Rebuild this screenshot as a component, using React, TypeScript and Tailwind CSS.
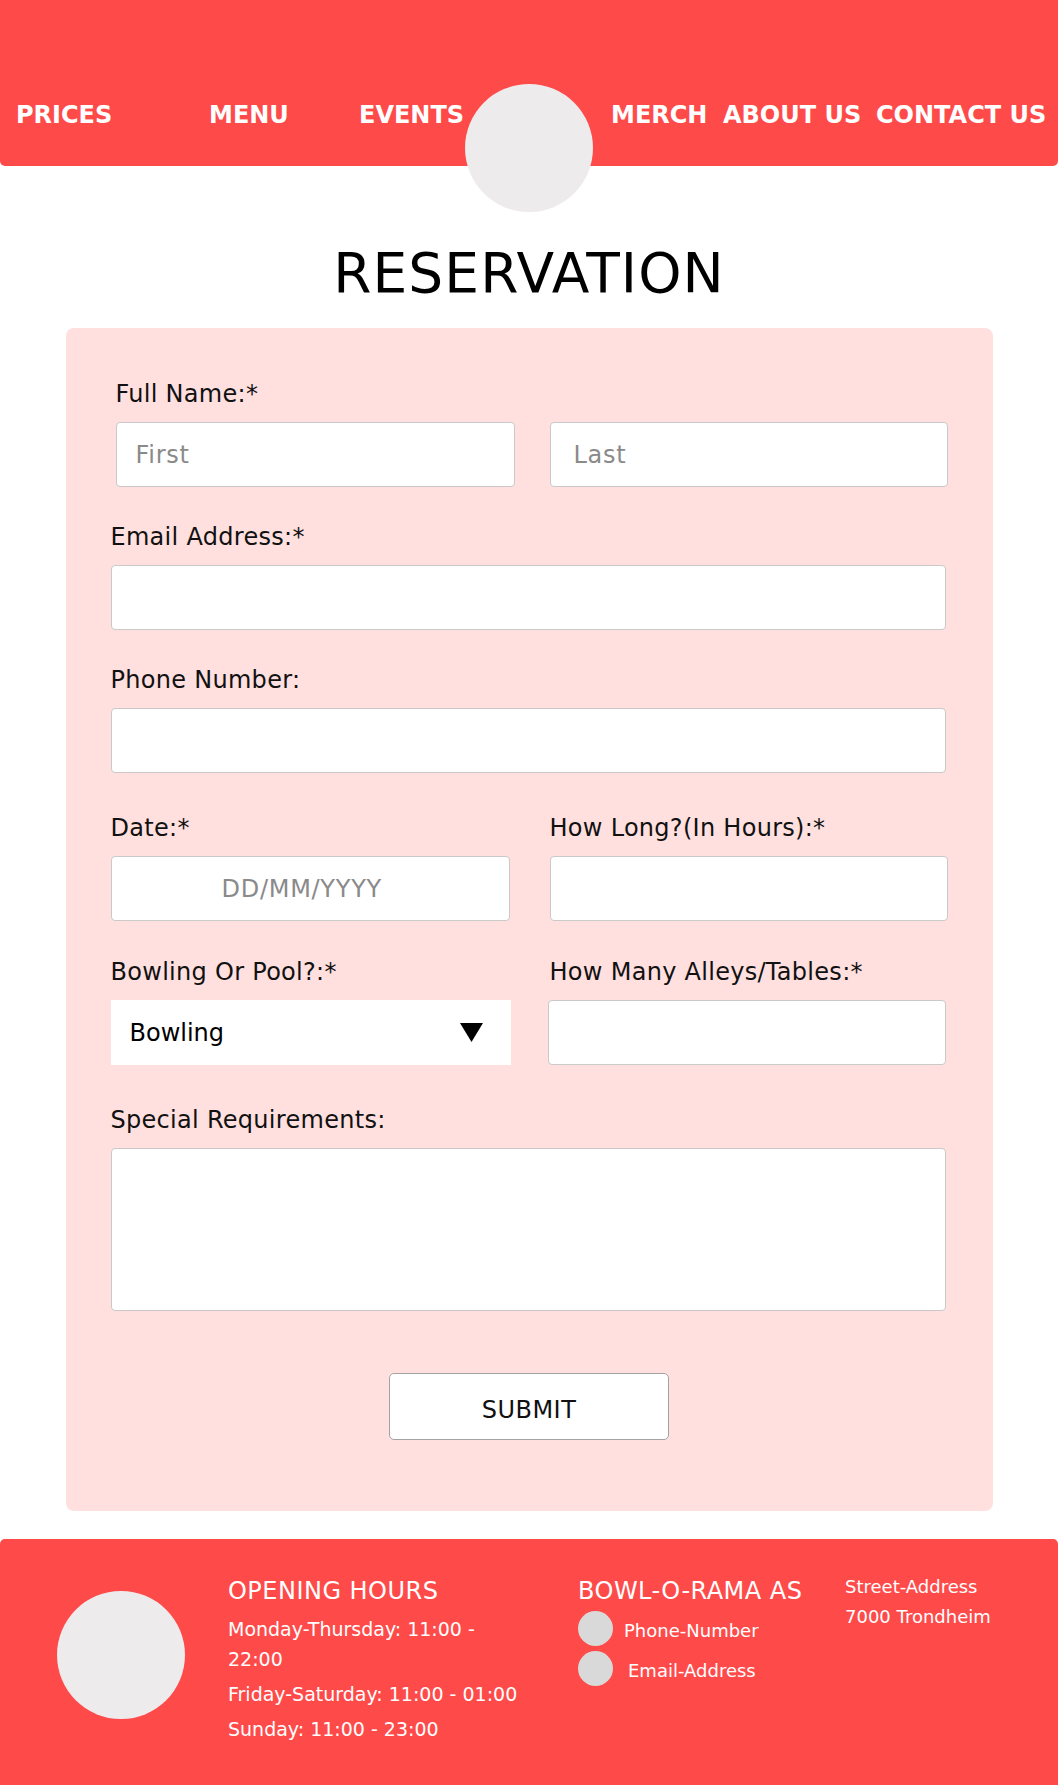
import React from 'react';

const navItems = [
  { label: 'PRICES', cls: 'ml-[16px] w-[98px]' },
  { label: 'MENU', cls: 'ml-[95px] w-[77px]' },
  { label: 'EVENTS', cls: 'ml-[73px] w-[104px]' },
  { label: 'MERCH', cls: 'ml-[148px] w-[93px]' },
  { label: 'ABOUT US', cls: 'ml-[19px] w-[137px]' },
  { label: 'CONTACT US', cls: 'ml-[16px] w-[170px]' },
];

const inputCls =
  'shrink-0 h-[65px] bg-white border border-[#c9c9c9] rounded-[4px] px-[19px] text-[24px] tracking-[0.03em] text-black placeholder:text-[#8a8a8a] outline-none';

const labelCls = 'text-[24px] leading-[28px] tracking-[0.012em] text-[#111]';

const Header: React.FC = () => (
  <header className="relative h-[166px] bg-[#ff4a4a] rounded-b-[5px] flex items-start pt-[101px]">
    {navItems.map((item) => (
      <a
        key={item.label}
        href="#"
        className={`${item.cls} shrink-0 whitespace-nowrap text-[24px] leading-[28px] font-bold text-white`}
      >
        {item.label}
      </a>
    ))}
    <div className="absolute left-[465px] top-[84px] w-[128px] h-[128px] rounded-full bg-[#edebeb]" />
  </header>
);

const ReservationForm: React.FC = () => (
  <form className="mx-auto mt-[23px] w-[927px] bg-[#ffe0df] rounded-[8px] pt-[52px] pl-[45px] pr-[45px] pb-[71px] flex flex-col">
    <div className="pl-[5px] flex flex-col">
      <label className={`${labelCls} tracking-[0.03em]`}>Full Name:*</label>
      <div className="mt-[14px] flex gap-[35px]">
        <input className={`${inputCls} w-[399px]`} placeholder="First" />
        <input className={`${inputCls} w-[398px] pl-[23px]`} placeholder="Last" />
      </div>
    </div>

    <label className={`${labelCls} mt-[36px]`}>Email Address:*</label>
    <input className={`${inputCls} mt-[14px] w-[835px]`} />

    <label className={`${labelCls} mt-[36px]`}>Phone Number:</label>
    <input className={`${inputCls} mt-[14px] w-[835px]`} />

    <div className="mt-[41px] flex">
      <div className="flex flex-col w-[439px] shrink-0">
        <label className={labelCls}>Date:*</label>
        <input className={`${inputCls} mt-[14px] w-[399px] pl-[110px]`} placeholder="DD/MM/YYYY" />
      </div>
      <div className="flex flex-col w-[398px] shrink-0">
        <label className={`${labelCls} tracking-[0.03em] whitespace-nowrap`}>How Long?(In Hours):*</label>
        <input className={`${inputCls} mt-[14px] w-[398px]`} />
      </div>
    </div>

    <div className="mt-[37px] flex">
      <div className="flex flex-col w-[439px] shrink-0">
        <label className={labelCls}>Bowling Or Pool?:*</label>
        <div className="mt-[14px] w-[400px] h-[65px] bg-white flex items-center justify-between pl-[19px] pr-[28px]">
          <span className="text-[24px] text-black">Bowling</span>
          <svg width="23" height="19" viewBox="0 0 23 19">
            <polygon points="0,0 23,0 11.5,19" fill="#000" />
          </svg>
        </div>
      </div>
      <div className="flex flex-col w-[398px] shrink-0">
        <label className={`${labelCls} whitespace-nowrap`}>How Many Alleys/Tables:*</label>
        <input className={`${inputCls} mt-[14px] -ml-[2px] w-[398px]`} />
      </div>
    </div>

    <label className={`${labelCls} mt-[41px]`}>Special Requirements:</label>
    <textarea className="mt-[14px] w-[835px] h-[163px] bg-white border border-[#c9c9c9] rounded-[4px] p-[16px] text-[20px] resize-none outline-none" />

    <button
      type="button"
      className="mt-[62px] self-center w-[280px] h-[67px] bg-white border-[1.5px] border-[#a3a3a3] rounded-[5px] text-[24px] tracking-[0.02em] text-[#111] pt-[6px]"
    >
      SUBMIT
    </button>
  </form>
);

const Footer: React.FC = () => (
  <footer className="mt-[28px] h-[246px] bg-[#ff4a4a] rounded-t-[5px] flex items-start pt-[38px] text-white">
    <div className="ml-[57px] mt-[14px] w-[128px] h-[128px] rounded-full bg-[#edebeb] shrink-0" />

    <div className="ml-[43px] w-[295px] shrink-0">
      <h3 className="text-[24px] leading-[28px] tracking-[0.02em]">OPENING HOURS</h3>
      <p className="mt-[9px] text-[19px] leading-[30px]">Monday-Thursday: 11:00 - 22:00</p>
      <p className="mt-[5px] text-[19px] leading-[30px]">Friday-Saturday: 11:00 - 01:00</p>
      <p className="mt-[5px] text-[19px] leading-[30px]">Sunday: 11:00 - 23:00</p>
    </div>

    <div className="ml-[55px] w-[240px] shrink-0">
      <h3 className="text-[24px] leading-[28px] tracking-[0.02em] whitespace-nowrap">BOWL-O-RAMA AS</h3>
      <div className="mt-[6px] flex items-center h-[35px]">
        <span className="w-[35px] h-[35px] rounded-full bg-[#d9d9d9] shrink-0" />
        <span className="ml-[11px] text-[18px] leading-[30px] pt-[5px]">Phone-Number</span>
      </div>
      <div className="mt-[5px] flex items-center h-[35px]">
        <span className="w-[35px] h-[35px] rounded-full bg-[#d9d9d9] shrink-0" />
        <span className="ml-[15px] text-[18px] leading-[30px] pt-[5px]">Email-Address</span>
      </div>
    </div>

    <div className="ml-[27px] -mt-[5px] text-[18px] leading-[30px] whitespace-nowrap">
      <p>Street-Address</p>
      <p>7000 Trondheim</p>
    </div>
  </footer>
);

export default function App() {
  return (
    <div className="w-[1058px] min-h-[1785px] bg-white font-['DejaVu_Sans',sans-serif] flex flex-col">
      <Header />
      <h1 className="mt-[76px] text-center text-[55px] leading-[63px] tracking-[0.02em] text-black">RESERVATION</h1>
      <ReservationForm />
      <Footer />
    </div>
  );
}
